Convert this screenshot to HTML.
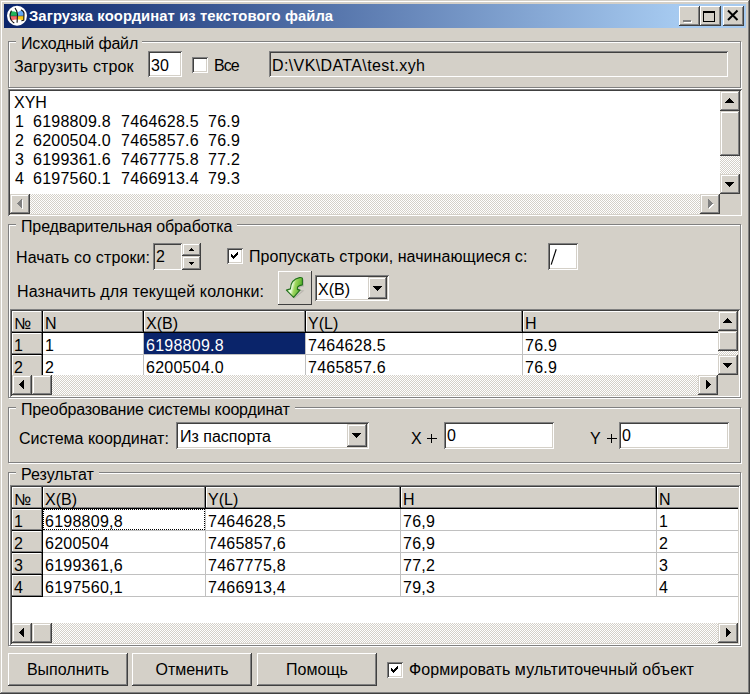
<!DOCTYPE html><html><head><meta charset="utf-8"><style>
html,body{margin:0;padding:0}
body{width:750px;height:694px;overflow:hidden;position:relative;background:#d4d0c8;font-family:"Liberation Sans",sans-serif}
div{position:absolute;box-sizing:border-box}
.t{font:16px/16px "Liberation Sans",sans-serif;white-space:pre;color:#000}
.rz{background:#d4d0c8;box-shadow:inset -1px -1px #404040,inset 1px 1px #fff,inset -2px -2px #808080}
.sb{background:#d4d0c8;box-shadow:inset -1px -1px #404040,inset 1px 1px #d4d0c8,inset -2px -2px #808080,inset 2px 2px #fff}
.sk{box-shadow:inset 1px 1px #808080,inset -1px -1px #fff,inset 2px 2px #404040,inset -2px -2px #d4d0c8}
.grp{border:1px solid #808080;box-shadow:inset 1px 1px #fff,1px 1px #fff}
.trk{background-color:#d4d0c8;background-image:repeating-conic-gradient(#fff 0 25%,#d4d0c8 0 50%);background-size:2px 2px}
.gl{background:#c0c0c0}
.bk{background:#000}
.fx{background:#d4d0c8;box-shadow:inset -1px -1px #808080,inset 1px 1px #fff}
</style></head><body>
<div style="left:0px;top:0px;width:750px;height:694px;background:#d4d0c8;box-shadow:inset -1px -1px #404040,inset 1px 1px #d4d0c8,inset -2px -2px #808080,inset 2px 2px #fff"></div>
<div style="left:4px;top:4px;width:742px;height:24px;background:linear-gradient(to right,#0a246a 0px,#a6caf0 673px)"></div>
<svg style="position:absolute;left:6px;top:5px" width="22" height="22" viewBox="0 0 22 22">
<circle cx="11" cy="10.8" r="10" fill="#fff"/>
<path d="M4.6 6.2 Q8 6 11.3 7.5 L11.5 11 L3.9 11.2 Q3.9 8.5 4.6 6.2 Z" fill="#1fb45a"/>
<path d="M11.3 7.5 Q13.5 6.2 15.6 5.1 Q17.6 6.2 18.1 8 L18 10.9 L11.5 11 Z" fill="#62a8f4"/>
<path d="M3.9 11 L11.5 11 L11.4 14.6 Q8 14.4 5.5 15.8 Q4.1 13.5 3.9 11 Z" fill="#f46868"/>
<path d="M11.5 10.9 L18 10.9 L17.9 15.4 Q14.8 14.5 11.4 14.6 Z" fill="#f8c818"/>
<path d="M5.3 6.1 Q3.8 9 4.1 11.1 Q4.3 13.8 5.3 15.3 Q6.5 17 7.9 17.8 M9.2 3.4 Q11.2 5.8 11.5 9.5 L11.1 17.2 M15.4 5 Q17.6 6.3 18 8 L17.8 15.2 L15.8 15.8" fill="none" stroke="#111" stroke-width="1.1" stroke-linecap="round"/>
<path d="M4.2 11 L17.8 10.9" fill="none" stroke="#333" stroke-width="0.5"/>
</svg>
<div style="left:29px;top:8px;font:bold 14.8px/16px 'Liberation Sans', sans-serif;color:#fff;white-space:pre;letter-spacing:0.08px">Загрузка координат из текстового файла</div>
<div style="left:679px;top:6px;width:21px;height:20px;background:#d4d0c8;box-shadow:inset -1px -1px #404040,inset 1px 1px #fff,inset -2px -2px #808080"></div>
<div style="left:700px;top:6px;width:21px;height:20px;background:#d4d0c8;box-shadow:inset -1px -1px #404040,inset 1px 1px #fff,inset -2px -2px #808080"></div>
<div style="left:723px;top:6px;width:21px;height:20px;background:#d4d0c8;box-shadow:inset -1px -1px #404040,inset 1px 1px #fff,inset -2px -2px #808080"></div>
<div style="left:684px;top:21px;width:8px;height:2px;background:#fff"></div>
<div style="left:683px;top:20px;width:8px;height:2px;background:#808080"></div>
<div style="left:703px;top:11px;width:12px;height:11px;border:1px solid #000;border-top-width:2px"></div>
<svg style="position:absolute;left:726px;top:9px" width="14" height="13" viewBox="0 0 14 13"><path d="M2 1.5 L11.5 11 M11.5 1.5 L2 11" stroke="#000" stroke-width="2"/></svg>
<div class="grp" style="left:8px;top:41px;width:733px;height:47px"></div>
<div style="left:16px;top:39px;width:126px;height:6px;background:#d4d0c8"></div>
<div class="t" style="left:21px;top:36px;letter-spacing:-0.17px">Исходный файл</div>
<div class="t" style="left:14px;top:59px;letter-spacing:0.14px">Загрузить строк</div>
<div class="sk" style="left:148px;top:51px;width:34px;height:26px;background:#fff;"></div>
<div class="t" style="left:151px;top:58px;">30</div>
<div class="sk" style="left:192px;top:57px;width:16px;height:16px;background:#fff;"></div>
<div class="t" style="left:214px;top:58px;letter-spacing:-0.9px">Все</div>
<div class="sk" style="left:269px;top:51px;width:459px;height:26px;background:#d4d0c8;"></div>
<div class="t" style="left:272px;top:58px;letter-spacing:0.38px">D:\VK\DATA\test.xyh</div>
<div class="sk" style="left:8px;top:89px;width:734px;height:127px;background:#fff;"></div>
<div class="t" style="left:14px;top:95px;">XYH</div>
<div class="t" style="left:15px;top:114px;letter-spacing:0.25px">1</div>
<div class="t" style="left:33px;top:114px;letter-spacing:0.25px">6198809.8</div>
<div class="t" style="left:121px;top:114px;letter-spacing:0.25px">7464628.5</div>
<div class="t" style="left:208px;top:114px;letter-spacing:0.25px">76.9</div>
<div class="t" style="left:15px;top:133px;letter-spacing:0.25px">2</div>
<div class="t" style="left:33px;top:133px;letter-spacing:0.25px">6200504.0</div>
<div class="t" style="left:121px;top:133px;letter-spacing:0.25px">7465857.6</div>
<div class="t" style="left:208px;top:133px;letter-spacing:0.25px">76.9</div>
<div class="t" style="left:15px;top:152px;letter-spacing:0.25px">3</div>
<div class="t" style="left:33px;top:152px;letter-spacing:0.25px">6199361.6</div>
<div class="t" style="left:121px;top:152px;letter-spacing:0.25px">7467775.8</div>
<div class="t" style="left:208px;top:152px;letter-spacing:0.25px">77.2</div>
<div class="t" style="left:15px;top:171px;letter-spacing:0.25px">4</div>
<div class="t" style="left:33px;top:171px;letter-spacing:0.25px">6197560.1</div>
<div class="t" style="left:121px;top:171px;letter-spacing:0.25px">7466913.4</div>
<div class="t" style="left:208px;top:171px;letter-spacing:0.25px">79.3</div>
<div class="trk" style="left:720px;top:111px;width:20px;height:83px"></div>
<div class="sb" style="left:720px;top:91px;width:20px;height:20px;"></div>
<svg style="position:absolute;left:725px;top:98px" width="9" height="5" shape-rendering="crispEdges"><polygon points="0,5 9,5 4.5,0" fill="#000"/></svg>
<div class="sb" style="left:720px;top:111px;width:20px;height:45px;"></div>
<div class="sb" style="left:720px;top:174px;width:20px;height:20px;"></div>
<svg style="position:absolute;left:725px;top:182px" width="9" height="5" shape-rendering="crispEdges"><polygon points="0,0 9,0 4.5,5" fill="#000"/></svg>
<div class="trk" style="left:10px;top:194px;width:710px;height:20px"></div>
<div class="sb" style="left:10px;top:194px;width:20px;height:20px;"></div>
<svg style="position:absolute;left:18px;top:200px" width="5" height="9" shape-rendering="crispEdges"><polygon points="5,0 5,9 0,4.5" fill="#fff"/></svg>
<svg style="position:absolute;left:17px;top:199px" width="5" height="9" shape-rendering="crispEdges"><polygon points="5,0 5,9 0,4.5" fill="#808080"/></svg>
<div class="sb" style="left:700px;top:194px;width:20px;height:20px;"></div>
<svg style="position:absolute;left:709px;top:200px" width="5" height="9" shape-rendering="crispEdges"><polygon points="0,0 0,9 5,4.5" fill="#fff"/></svg>
<svg style="position:absolute;left:708px;top:199px" width="5" height="9" shape-rendering="crispEdges"><polygon points="0,0 0,9 5,4.5" fill="#808080"/></svg>
<div style="left:720px;top:194px;width:20px;height:20px;background:#d4d0c8"></div>
<div class="grp" style="left:8px;top:224px;width:733px;height:174px"></div>
<div style="left:16px;top:222px;width:221px;height:6px;background:#d4d0c8"></div>
<div class="t" style="left:21px;top:219px;letter-spacing:-0.13px">Предварительная обработка</div>
<div class="t" style="left:16px;top:250px;letter-spacing:0.12px">Начать со строки:</div>
<div class="sk" style="left:153px;top:243px;width:29px;height:27px;background:#d4d0c8;"></div>
<div class="t" style="left:156px;top:249px;">2</div>
<div class="sb" style="left:182px;top:243px;width:19px;height:13px;"></div>
<svg style="position:absolute;left:189px;top:248px" width="5" height="3" shape-rendering="crispEdges"><polygon points="0,3 5,3 2.5,0" fill="#000"/></svg>
<div class="sb" style="left:182px;top:256px;width:19px;height:14px;"></div>
<svg style="position:absolute;left:189px;top:262px" width="5" height="3" shape-rendering="crispEdges"><polygon points="0,0 5,0 2.5,3" fill="#000"/></svg>
<div class="sk" style="left:227px;top:248px;width:16px;height:16px;background:#fff;"></div>
<svg style="position:absolute;left:231px;top:252px" width="9" height="8" shape-rendering="crispEdges"><path d="M0 2h1v1h1v1h1v-1h1v-1h1v-1h1v-1h1v3h-1v1h-1v1h-1v1h-1v1h-1v-1h-1v-1h-1v-1h-1z" fill="#000"/></svg>
<div class="t" style="left:249px;top:249px;letter-spacing:0.05px">Пропускать строки, начинающиеся с:</div>
<div class="sk" style="left:548px;top:243px;width:30px;height:27px;background:#fff;"></div>
<svg style="position:absolute;left:548px;top:246px" width="12" height="22"><path d="M8.2 3.2 L3.2 18.6" stroke="#000" stroke-width="1.15"/></svg>
<div class="t" style="left:17px;top:284px;letter-spacing:0.1px">Назначить для текущей колонки:</div>
<div style="left:278px;top:271px;width:34px;height:34px;background:#d4d0c8;box-shadow:inset -1px -1px #404040,inset 1px 1px #fff"></div>
<svg style="position:absolute;left:278px;top:271px" width="34" height="34" viewBox="0 0 34 34">
<defs><linearGradient id="ga" x1="0.15" y1="0.3" x2="0.85" y2="0.5"><stop offset="0" stop-color="#c8eca0"/><stop offset="0.3" stop-color="#f0ffe6"/><stop offset="0.55" stop-color="#9ed65e"/><stop offset="1" stop-color="#62b832"/></linearGradient></defs>
<path d="M16 27.2 L25 20 L20.4 19.3 L20.4 17.2 Q21.8 15.2 25.4 14.9 L25.4 8.2" fill="none" stroke="#000" stroke-opacity="0.12" stroke-width="1.2"/>
<path d="M15.6 26.3 L8.4 19.1 L12.4 17.9 C12.6 12.5 15.5 7.8 21.6 6.6 Q23.5 6.4 24.4 7.2 L24.4 13.9 Q21 14.2 19.5 16.2 L19.4 18.4 L22 19.1 Z" fill="url(#ga)" stroke="#21701c" stroke-width="1.1" stroke-linejoin="round"/>
</svg>
<div class="sk" style="left:315px;top:275px;width:74px;height:26px;background:#fff;"></div>
<div class="sb" style="left:368px;top:277px;width:19px;height:22px;"></div>
<svg style="position:absolute;left:373px;top:286px" width="9" height="5" shape-rendering="crispEdges"><polygon points="0,0 9,0 4.5,5" fill="#000"/></svg>
<div class="t" style="left:318px;top:282px;">X(B)</div>
<div class="sk" style="left:10px;top:309px;width:730px;height:88px;background:#fff;"></div>
<div style="left:12px;top:311px;width:706px;height:64px;overflow:hidden;background:#fff">
<div class="fx" style="left:0px;top:0px;width:30px;height:21px"></div>
<div class="bk" style="left:30px;top:0px;width:1px;height:22px"></div>
<div class="bk" style="left:0px;top:21px;width:31px;height:1px"></div>
<div class="t" style="left:2px;top:5px;color:#000;">№</div>
<div class="fx" style="left:31px;top:0px;width:100px;height:21px"></div>
<div class="bk" style="left:131px;top:0px;width:1px;height:22px"></div>
<div class="bk" style="left:31px;top:21px;width:101px;height:1px"></div>
<div class="t" style="left:33px;top:5px;color:#000;">N</div>
<div class="fx" style="left:132px;top:0px;width:161px;height:21px"></div>
<div class="bk" style="left:293px;top:0px;width:1px;height:22px"></div>
<div class="bk" style="left:132px;top:21px;width:162px;height:1px"></div>
<div class="t" style="left:134px;top:5px;color:#000;">X(B)</div>
<div class="fx" style="left:294px;top:0px;width:216px;height:21px"></div>
<div class="bk" style="left:510px;top:0px;width:1px;height:22px"></div>
<div class="bk" style="left:294px;top:21px;width:217px;height:1px"></div>
<div class="t" style="left:296px;top:5px;color:#000;">Y(L)</div>
<div class="fx" style="left:511px;top:0px;width:300px;height:21px"></div>
<div class="bk" style="left:811px;top:0px;width:1px;height:22px"></div>
<div class="bk" style="left:511px;top:21px;width:301px;height:1px"></div>
<div class="t" style="left:513px;top:5px;color:#000;">H</div>
<div class="fx" style="left:0px;top:22px;width:30px;height:21px"></div>
<div class="bk" style="left:30px;top:22px;width:1px;height:22px"></div>
<div class="bk" style="left:0px;top:43px;width:31px;height:1px"></div>
<div class="t" style="left:2px;top:27px;color:#000;letter-spacing:0.25px;">1</div>
<div class="gl" style="left:131px;top:22px;width:1px;height:22px"></div>
<div class="gl" style="left:31px;top:43px;width:101px;height:1px"></div>
<div class="t" style="left:33px;top:27px;color:#000;letter-spacing:0.25px;">1</div>
<div style="left:132px;top:22px;width:161px;height:21px;background:#0a246a"></div>
<div class="gl" style="left:293px;top:22px;width:1px;height:22px"></div>
<div class="gl" style="left:132px;top:43px;width:162px;height:1px"></div>
<div class="t" style="left:134px;top:27px;color:#fff;letter-spacing:0.25px;">6198809.8</div>
<div class="gl" style="left:510px;top:22px;width:1px;height:22px"></div>
<div class="gl" style="left:294px;top:43px;width:217px;height:1px"></div>
<div class="t" style="left:296px;top:27px;color:#000;letter-spacing:0.25px;">7464628.5</div>
<div class="gl" style="left:811px;top:22px;width:1px;height:22px"></div>
<div class="gl" style="left:511px;top:43px;width:301px;height:1px"></div>
<div class="t" style="left:513px;top:27px;color:#000;letter-spacing:0.25px;">76.9</div>
<div class="fx" style="left:0px;top:44px;width:30px;height:21px"></div>
<div class="bk" style="left:30px;top:44px;width:1px;height:22px"></div>
<div class="bk" style="left:0px;top:65px;width:31px;height:1px"></div>
<div class="t" style="left:2px;top:49px;color:#000;letter-spacing:0.25px;">2</div>
<div class="gl" style="left:131px;top:44px;width:1px;height:22px"></div>
<div class="gl" style="left:31px;top:65px;width:101px;height:1px"></div>
<div class="t" style="left:33px;top:49px;color:#000;letter-spacing:0.25px;">2</div>
<div class="gl" style="left:293px;top:44px;width:1px;height:22px"></div>
<div class="gl" style="left:132px;top:65px;width:162px;height:1px"></div>
<div class="t" style="left:134px;top:49px;color:#000;letter-spacing:0.25px;">6200504.0</div>
<div class="gl" style="left:510px;top:44px;width:1px;height:22px"></div>
<div class="gl" style="left:294px;top:65px;width:217px;height:1px"></div>
<div class="t" style="left:296px;top:49px;color:#000;letter-spacing:0.25px;">7465857.6</div>
<div class="gl" style="left:811px;top:44px;width:1px;height:22px"></div>
<div class="gl" style="left:511px;top:65px;width:301px;height:1px"></div>
<div class="t" style="left:513px;top:49px;color:#000;letter-spacing:0.25px;">76.9</div>
</div>
<div class="trk" style="left:718px;top:331px;width:20px;height:44px"></div>
<div class="sb" style="left:718px;top:311px;width:20px;height:20px;"></div>
<svg style="position:absolute;left:723px;top:318px" width="9" height="5" shape-rendering="crispEdges"><polygon points="0,5 9,5 4.5,0" fill="#000"/></svg>
<div class="sb" style="left:718px;top:331px;width:20px;height:20px;"></div>
<div class="sb" style="left:718px;top:355px;width:20px;height:20px;"></div>
<svg style="position:absolute;left:723px;top:363px" width="9" height="5" shape-rendering="crispEdges"><polygon points="0,0 9,0 4.5,5" fill="#000"/></svg>
<div class="trk" style="left:12px;top:375px;width:706px;height:20px"></div>
<div class="sb" style="left:12px;top:375px;width:20px;height:20px;"></div>
<svg style="position:absolute;left:19px;top:380px" width="5" height="9" shape-rendering="crispEdges"><polygon points="5,0 5,9 0,4.5" fill="#000"/></svg>
<div class="sb" style="left:32px;top:375px;width:20px;height:20px;"></div>
<div class="sb" style="left:698px;top:375px;width:20px;height:20px;"></div>
<svg style="position:absolute;left:706px;top:380px" width="5" height="9" shape-rendering="crispEdges"><polygon points="0,0 0,9 5,4.5" fill="#000"/></svg>
<div style="left:718px;top:375px;width:20px;height:20px;background:#d4d0c8"></div>
<div class="grp" style="left:8px;top:407px;width:733px;height:56px"></div>
<div style="left:16px;top:405px;width:279px;height:6px;background:#d4d0c8"></div>
<div class="t" style="left:21px;top:402px;letter-spacing:-0.16px">Преобразование системы координат</div>
<div class="t" style="left:19px;top:431px;">Система координат:</div>
<div class="sk" style="left:176px;top:422px;width:193px;height:27px;background:#fff;"></div>
<div class="sb" style="left:347px;top:424px;width:20px;height:23px;"></div>
<svg style="position:absolute;left:352px;top:433px" width="9" height="5" shape-rendering="crispEdges"><polygon points="0,0 9,0 4.5,5" fill="#000"/></svg>
<div class="t" style="left:180px;top:429px;">Из паспорта</div>
<div class="t" style="left:411px;top:431px;">X</div>
<div style="left:427px;top:438px;width:10px;height:1px;background:#000"></div>
<div style="left:431px;top:434px;width:1px;height:9px;background:#000"></div>
<div class="sk" style="left:444px;top:422px;width:110px;height:27px;background:#fff;"></div>
<div class="t" style="left:447px;top:428px;">0</div>
<div class="t" style="left:590px;top:431px;">Y</div>
<div style="left:607px;top:438px;width:10px;height:1px;background:#000"></div>
<div style="left:611px;top:434px;width:1px;height:9px;background:#000"></div>
<div class="sk" style="left:619px;top:422px;width:110px;height:27px;background:#fff;"></div>
<div class="t" style="left:622px;top:428px;">0</div>
<div class="grp" style="left:8px;top:472px;width:733px;height:174px"></div>
<div style="left:16px;top:470px;width:83px;height:6px;background:#d4d0c8"></div>
<div class="t" style="left:21px;top:467px;">Результат</div>
<div class="sk" style="left:10px;top:485px;width:730px;height:160px;background:#fff;"></div>
<div style="left:12px;top:487px;width:726px;height:136px;overflow:hidden;background:#fff">
<div class="fx" style="left:0px;top:0px;width:30px;height:21px"></div>
<div class="bk" style="left:30px;top:0px;width:1px;height:22px"></div>
<div class="bk" style="left:0px;top:21px;width:31px;height:1px"></div>
<div class="t" style="left:2px;top:5px;color:#000;">№</div>
<div class="fx" style="left:31px;top:0px;width:162px;height:21px"></div>
<div class="bk" style="left:193px;top:0px;width:1px;height:22px"></div>
<div class="bk" style="left:31px;top:21px;width:163px;height:1px"></div>
<div class="t" style="left:33px;top:5px;color:#000;">X(B)</div>
<div class="fx" style="left:194px;top:0px;width:194px;height:21px"></div>
<div class="bk" style="left:388px;top:0px;width:1px;height:22px"></div>
<div class="bk" style="left:194px;top:21px;width:195px;height:1px"></div>
<div class="t" style="left:196px;top:5px;color:#000;">Y(L)</div>
<div class="fx" style="left:389px;top:0px;width:255px;height:21px"></div>
<div class="bk" style="left:644px;top:0px;width:1px;height:22px"></div>
<div class="bk" style="left:389px;top:21px;width:256px;height:1px"></div>
<div class="t" style="left:391px;top:5px;color:#000;">H</div>
<div class="fx" style="left:645px;top:0px;width:300px;height:21px"></div>
<div class="bk" style="left:945px;top:0px;width:1px;height:22px"></div>
<div class="bk" style="left:645px;top:21px;width:301px;height:1px"></div>
<div class="t" style="left:647px;top:5px;color:#000;">N</div>
<div class="fx" style="left:0px;top:22px;width:30px;height:21px"></div>
<div class="bk" style="left:30px;top:22px;width:1px;height:22px"></div>
<div class="bk" style="left:0px;top:43px;width:31px;height:1px"></div>
<div class="t" style="left:2px;top:27px;color:#000;letter-spacing:0.25px;">1</div>
<div class="gl" style="left:193px;top:22px;width:1px;height:22px"></div>
<div class="gl" style="left:31px;top:43px;width:163px;height:1px"></div>
<div class="t" style="left:33px;top:27px;color:#000;letter-spacing:0.25px;">6198809,8</div>
<div style="left:31px;top:22px;width:162px;height:21px;border:1px dotted #000"></div>
<div class="gl" style="left:388px;top:22px;width:1px;height:22px"></div>
<div class="gl" style="left:194px;top:43px;width:195px;height:1px"></div>
<div class="t" style="left:196px;top:27px;color:#000;letter-spacing:0.25px;">7464628,5</div>
<div class="gl" style="left:644px;top:22px;width:1px;height:22px"></div>
<div class="gl" style="left:389px;top:43px;width:256px;height:1px"></div>
<div class="t" style="left:391px;top:27px;color:#000;letter-spacing:0.25px;">76,9</div>
<div class="gl" style="left:945px;top:22px;width:1px;height:22px"></div>
<div class="gl" style="left:645px;top:43px;width:301px;height:1px"></div>
<div class="t" style="left:647px;top:27px;color:#000;letter-spacing:0.25px;">1</div>
<div class="fx" style="left:0px;top:44px;width:30px;height:21px"></div>
<div class="bk" style="left:30px;top:44px;width:1px;height:22px"></div>
<div class="bk" style="left:0px;top:65px;width:31px;height:1px"></div>
<div class="t" style="left:2px;top:49px;color:#000;letter-spacing:0.25px;">2</div>
<div class="gl" style="left:193px;top:44px;width:1px;height:22px"></div>
<div class="gl" style="left:31px;top:65px;width:163px;height:1px"></div>
<div class="t" style="left:33px;top:49px;color:#000;letter-spacing:0.25px;">6200504</div>
<div class="gl" style="left:388px;top:44px;width:1px;height:22px"></div>
<div class="gl" style="left:194px;top:65px;width:195px;height:1px"></div>
<div class="t" style="left:196px;top:49px;color:#000;letter-spacing:0.25px;">7465857,6</div>
<div class="gl" style="left:644px;top:44px;width:1px;height:22px"></div>
<div class="gl" style="left:389px;top:65px;width:256px;height:1px"></div>
<div class="t" style="left:391px;top:49px;color:#000;letter-spacing:0.25px;">76,9</div>
<div class="gl" style="left:945px;top:44px;width:1px;height:22px"></div>
<div class="gl" style="left:645px;top:65px;width:301px;height:1px"></div>
<div class="t" style="left:647px;top:49px;color:#000;letter-spacing:0.25px;">2</div>
<div class="fx" style="left:0px;top:66px;width:30px;height:21px"></div>
<div class="bk" style="left:30px;top:66px;width:1px;height:22px"></div>
<div class="bk" style="left:0px;top:87px;width:31px;height:1px"></div>
<div class="t" style="left:2px;top:71px;color:#000;letter-spacing:0.25px;">3</div>
<div class="gl" style="left:193px;top:66px;width:1px;height:22px"></div>
<div class="gl" style="left:31px;top:87px;width:163px;height:1px"></div>
<div class="t" style="left:33px;top:71px;color:#000;letter-spacing:0.25px;">6199361,6</div>
<div class="gl" style="left:388px;top:66px;width:1px;height:22px"></div>
<div class="gl" style="left:194px;top:87px;width:195px;height:1px"></div>
<div class="t" style="left:196px;top:71px;color:#000;letter-spacing:0.25px;">7467775,8</div>
<div class="gl" style="left:644px;top:66px;width:1px;height:22px"></div>
<div class="gl" style="left:389px;top:87px;width:256px;height:1px"></div>
<div class="t" style="left:391px;top:71px;color:#000;letter-spacing:0.25px;">77,2</div>
<div class="gl" style="left:945px;top:66px;width:1px;height:22px"></div>
<div class="gl" style="left:645px;top:87px;width:301px;height:1px"></div>
<div class="t" style="left:647px;top:71px;color:#000;letter-spacing:0.25px;">3</div>
<div class="fx" style="left:0px;top:88px;width:30px;height:21px"></div>
<div class="bk" style="left:30px;top:88px;width:1px;height:22px"></div>
<div class="bk" style="left:0px;top:109px;width:31px;height:1px"></div>
<div class="t" style="left:2px;top:93px;color:#000;letter-spacing:0.25px;">4</div>
<div class="gl" style="left:193px;top:88px;width:1px;height:22px"></div>
<div class="gl" style="left:31px;top:109px;width:163px;height:1px"></div>
<div class="t" style="left:33px;top:93px;color:#000;letter-spacing:0.25px;">6197560,1</div>
<div class="gl" style="left:388px;top:88px;width:1px;height:22px"></div>
<div class="gl" style="left:194px;top:109px;width:195px;height:1px"></div>
<div class="t" style="left:196px;top:93px;color:#000;letter-spacing:0.25px;">7466913,4</div>
<div class="gl" style="left:644px;top:88px;width:1px;height:22px"></div>
<div class="gl" style="left:389px;top:109px;width:256px;height:1px"></div>
<div class="t" style="left:391px;top:93px;color:#000;letter-spacing:0.25px;">79,3</div>
<div class="gl" style="left:945px;top:88px;width:1px;height:22px"></div>
<div class="gl" style="left:645px;top:109px;width:301px;height:1px"></div>
<div class="t" style="left:647px;top:93px;color:#000;letter-spacing:0.25px;">4</div>
</div>
<div class="trk" style="left:12px;top:623px;width:726px;height:20px"></div>
<div class="sb" style="left:12px;top:623px;width:20px;height:20px;"></div>
<svg style="position:absolute;left:19px;top:628px" width="5" height="9" shape-rendering="crispEdges"><polygon points="5,0 5,9 0,4.5" fill="#000"/></svg>
<div class="sb" style="left:32px;top:623px;width:20px;height:20px;"></div>
<div class="sb" style="left:718px;top:623px;width:20px;height:20px;"></div>
<svg style="position:absolute;left:726px;top:628px" width="5" height="9" shape-rendering="crispEdges"><polygon points="0,0 0,9 5,4.5" fill="#000"/></svg>
<div class="rz" style="left:8px;top:653px;width:120px;height:33px;"></div>
<div class="t" style="left:8px;top:662px;width:120px;text-align:center">Выполнить</div>
<div class="rz" style="left:132px;top:653px;width:120px;height:33px;"></div>
<div class="t" style="left:132px;top:662px;width:120px;text-align:center">Отменить</div>
<div class="rz" style="left:257px;top:653px;width:120px;height:33px;"></div>
<div class="t" style="left:257px;top:662px;width:120px;text-align:center">Помощь</div>
<div class="sk" style="left:387px;top:662px;width:16px;height:16px;background:#fff;"></div>
<svg style="position:absolute;left:391px;top:666px" width="9" height="8" shape-rendering="crispEdges"><path d="M0 2h1v1h1v1h1v-1h1v-1h1v-1h1v-1h1v3h-1v1h-1v1h-1v1h-1v1h-1v-1h-1v-1h-1v-1h-1z" fill="#000"/></svg>
<div class="t" style="left:409px;top:662px;letter-spacing:0.1px">Формировать мультиточечный объект</div>
</body></html>
